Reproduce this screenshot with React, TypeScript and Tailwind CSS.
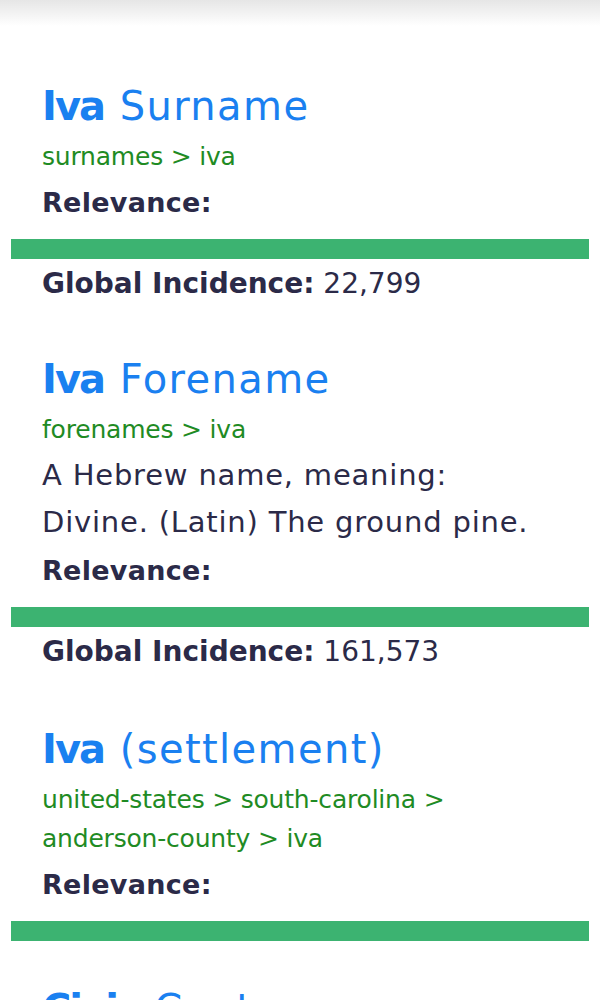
import React from "react";

function Title({ bold, rest }: { bold: string; rest: string }) {
  return (
    <h2 className="text-[40px] leading-[50px] text-[#1a80f0] font-normal">
      <span className="font-bold tracking-[-2px]">{bold}</span>{" "}
      <span className="ml-[3px] tracking-[1.4px]">{rest}</span>
    </h2>
  );
}

function Crumb({ children }: { children: React.ReactNode }) {
  return (
    <div className="mt-[6px] mb-[3px] text-[25px] leading-[39px] tracking-[-0.2px] text-[#1f8b24]">
      {children}
    </div>
  );
}

function Relevance() {
  return (
    <div className="text-[27px] leading-[47px] font-bold tracking-[0.3px] text-[#2b2a48]">Relevance:</div>
  );
}

function Bar() {
  return <div className="mt-[13px] h-[20px] bg-[#3cb371] -mx-[31px]" />;
}

function Global({ value }: { value: string }) {
  return (
    <div className="mt-[1px] text-[28px] leading-[47px] text-[#2b2a48]">
      <span className="font-bold">Global Incidence:</span> {value}
    </div>
  );
}

export default function App() {
  return (
    <div className="min-h-screen bg-white font-['DejaVu_Sans',sans-serif] overflow-hidden">
      <div className="h-[26px] bg-gradient-to-b from-[#e6e6e6] to-white" />
      <div className="px-[11px] pt-[55px]">
        <div className="px-[31px]">
          <section className="mb-[47px]">
            <Title bold="Iva" rest="Surname" />
            <Crumb>surnames &gt; iva</Crumb>
            <Relevance />
            <Bar />
            <Global value="22,799" />
          </section>
          <section className="mb-[49px]">
            <Title bold="Iva" rest="Forename" />
            <Crumb>forenames &gt; iva</Crumb>
            <p className="text-[29px] leading-[47px] tracking-[0.8px] text-[#2b2a48] mb-[1px]">
              A Hebrew name, meaning:
              <br />
              Divine. (Latin) The ground pine.
            </p>
            <Relevance />
            <Bar />
            <Global value="161,573" />
          </section>
          <section className="mb-[43px]">
            <Title bold="Iva" rest="(settlement)" />
            <Crumb>
              united-states &gt; south-carolina &gt;
              <br />
              anderson-county &gt; iva
            </Crumb>
            <Relevance />
            <Bar />
          </section>
          <section>
            <Title bold="Civic" rest="Center" />
          </section>
        </div>
      </div>
    </div>
  );
}
